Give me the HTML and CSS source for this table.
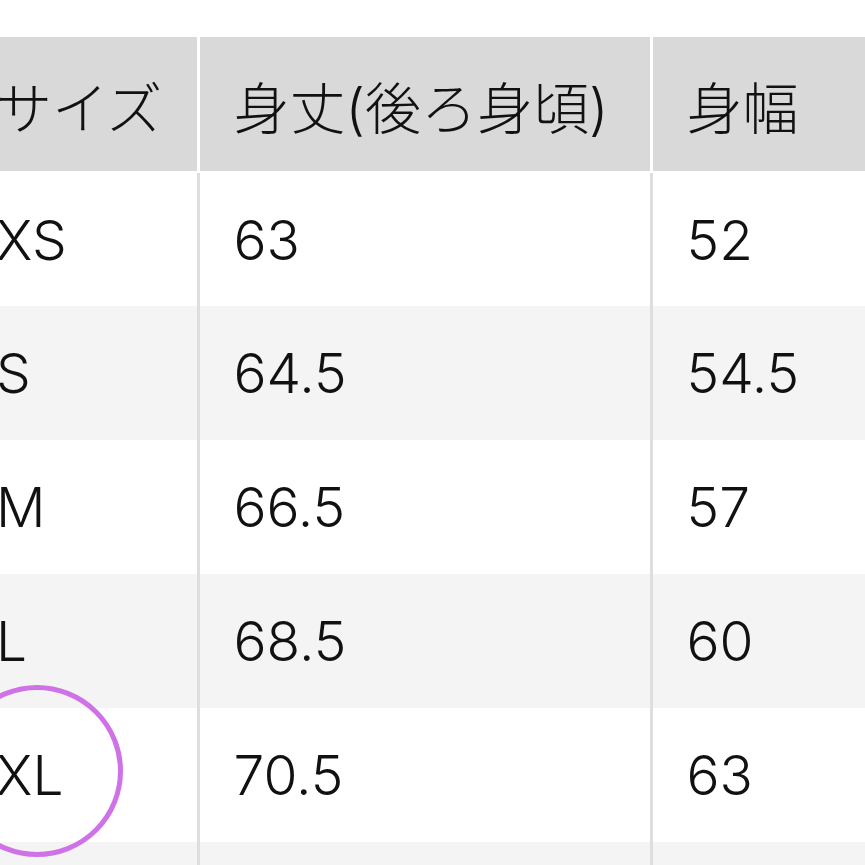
FILE: index.html
```html
<!DOCTYPE html>
<html lang="ja">
<head>
<meta charset="utf-8">
<title>サイズ表</title>
<link rel="stylesheet" href="styles.css">
</head>
<body>
<div class="page">
  <table class="size-table">
    <thead>
      <tr>
        <th class="c1">サイズ</th>
        <th class="c2">身丈(後ろ身頃)</th>
        <th class="c3">身幅</th>
      </tr>
    </thead>
    <tbody>
      <tr><td class="c1">XS</td><td class="c2">63</td><td class="c3">52</td></tr>
      <tr class="alt"><td class="c1">S</td><td class="c2">64.5</td><td class="c3">54.5</td></tr>
      <tr><td class="c1">M</td><td class="c2">66.5</td><td class="c3">57</td></tr>
      <tr class="alt"><td class="c1">L</td><td class="c2">68.5</td><td class="c3">60</td></tr>
      <tr><td class="c1">XL</td><td class="c2">70.5</td><td class="c3">63</td></tr>
      <tr class="alt"><td class="c1"></td><td class="c2"></td><td class="c3"></td></tr>
    </tbody>
  </table>
  <div class="mark"></div>
</div>
</body>
</html>
```

FILE: styles.css
```css
html, body {
  margin: 0;
  padding: 0;
  background: #ffffff;
}

.page {
  position: relative;
  width: 865px;
  height: 865px;
  overflow: hidden;
  background: #ffffff;
}

.size-table {
  margin-top: 37px;
  margin-left: -38px;
  border-collapse: collapse;
  table-layout: fixed;
  width: 1000px;
  font-family: "Inter", "Noto Sans CJK JP", sans-serif;
  font-weight: 300;
  font-size: 55px;
  color: #111111;
}

.size-table th,
.size-table td {
  padding: 0 0 0 34px;
  text-align: left;
  font-weight: 300;
  white-space: nowrap;
  box-sizing: border-box;
  vertical-align: middle;
}

.size-table th {
  height: 135px;
  background: #d9d9d9;
  border-right: 3px solid #ffffff;
  border-bottom: 2px solid #ffffff;
  font-family: "Noto Sans CJK JP", sans-serif;
  font-size: 56px;
  font-weight: 300;
}

.size-table th.c2 {
  font-family: "Inter", "Noto Sans CJK JP", sans-serif;
}

.size-table td {
  height: 134px;
  background: #ffffff;
  border-right: 3px solid #dedede;
}

.size-table tr.alt td {
  background: #f4f4f4;
}

.c1 { width: 236px; }
.c2 { width: 453px; }
.c3 { width: 311px; }

.mark {
  position: absolute;
  left: -49px;
  top: 685px;
  width: 172px;
  height: 172px;
  box-sizing: border-box;
  border: 5px solid #cf72e8;
  border-radius: 50%;
}
```
